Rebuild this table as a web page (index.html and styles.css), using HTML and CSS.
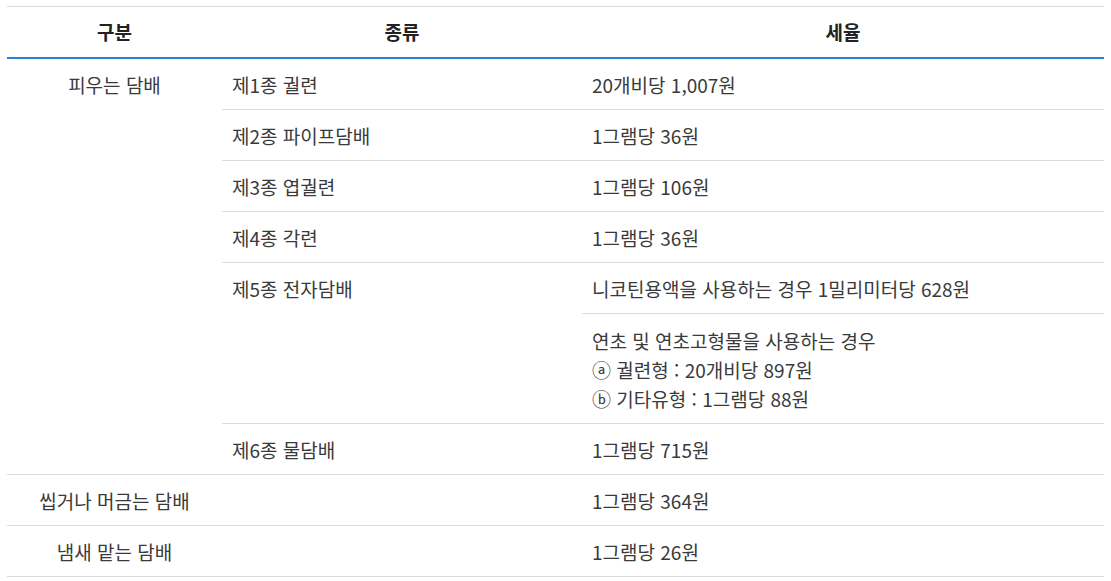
FILE: index.html
```html
<!DOCTYPE html>
<html lang="ko">
<head>
<meta charset="utf-8">
<link rel="stylesheet" href="styles.css">
</head>
<body>
<table class="tax">
  <colgroup>
    <col class="c1"><col class="c2"><col class="c3">
  </colgroup>
  <thead>
    <tr><th>구분</th><th>종류</th><th>세율</th></tr>
  </thead>
  <tbody>
    <tr><td class="cat" rowspan="7">피우는 담배</td><td>제1종 궐련</td><td>20개비당 1,007원</td></tr>
    <tr><td>제2종 파이프담배</td><td>1그램당 36원</td></tr>
    <tr><td>제3종 엽궐련</td><td>1그램당 106원</td></tr>
    <tr><td>제4종 각련</td><td>1그램당 36원</td></tr>
    <tr><td rowspan="2">제5종 전자담배</td><td>니코틴용액을 사용하는 경우 1밀리미터당 628원</td></tr>
    <tr><td class="multi">연초 및 연초고형물을 사용하는 경우<br>ⓐ 궐련형 : 20개비당 897원<br>ⓑ 기타유형 : 1그램당 88원</td></tr>
    <tr><td>제6종 물담배</td><td>1그램당 715원</td></tr>
    <tr><td class="cat">씹거나 머금는 담배</td><td></td><td>1그램당 364원</td></tr>
    <tr><td class="cat">냄새 맡는 담배</td><td></td><td>1그램당 26원</td></tr>
  </tbody>
</table>
</body>
</html>
```
FILE: styles.css
```css
html, body {
  margin: 0;
  padding: 0;
  background: #fff;
}
body {
  padding: 6px 7px 0 7px;
  font-family: "Noto Sans CJK KR", "Noto Sans", sans-serif;
  font-size: 19px;
  color: #3a3a3a;
}
.tax {
  width: 1097px;
  border-collapse: collapse;
  table-layout: fixed;
  border-top: 1px solid #dcdcdc;
}
.c1 { width: 215px; }
.c2 { width: 360px; }
.c3 { width: 522px; }
.tax th {
  height: 50px;
  padding: 0;
  font-weight: 700;
  color: #222;
  text-align: center;
  vertical-align: middle;
  border-bottom: 2px solid #2b80d6;
  line-height: 28px;
}
.tax td {
  padding: 12px 10px 10px 10px;
  line-height: 28px;
  vertical-align: top;
  text-align: left;
  border-bottom: 1px solid #dcdcdc;
}
.tax td.cat {
  text-align: center;
}
.tax td.multi {
  line-height: 29px;
}
```
